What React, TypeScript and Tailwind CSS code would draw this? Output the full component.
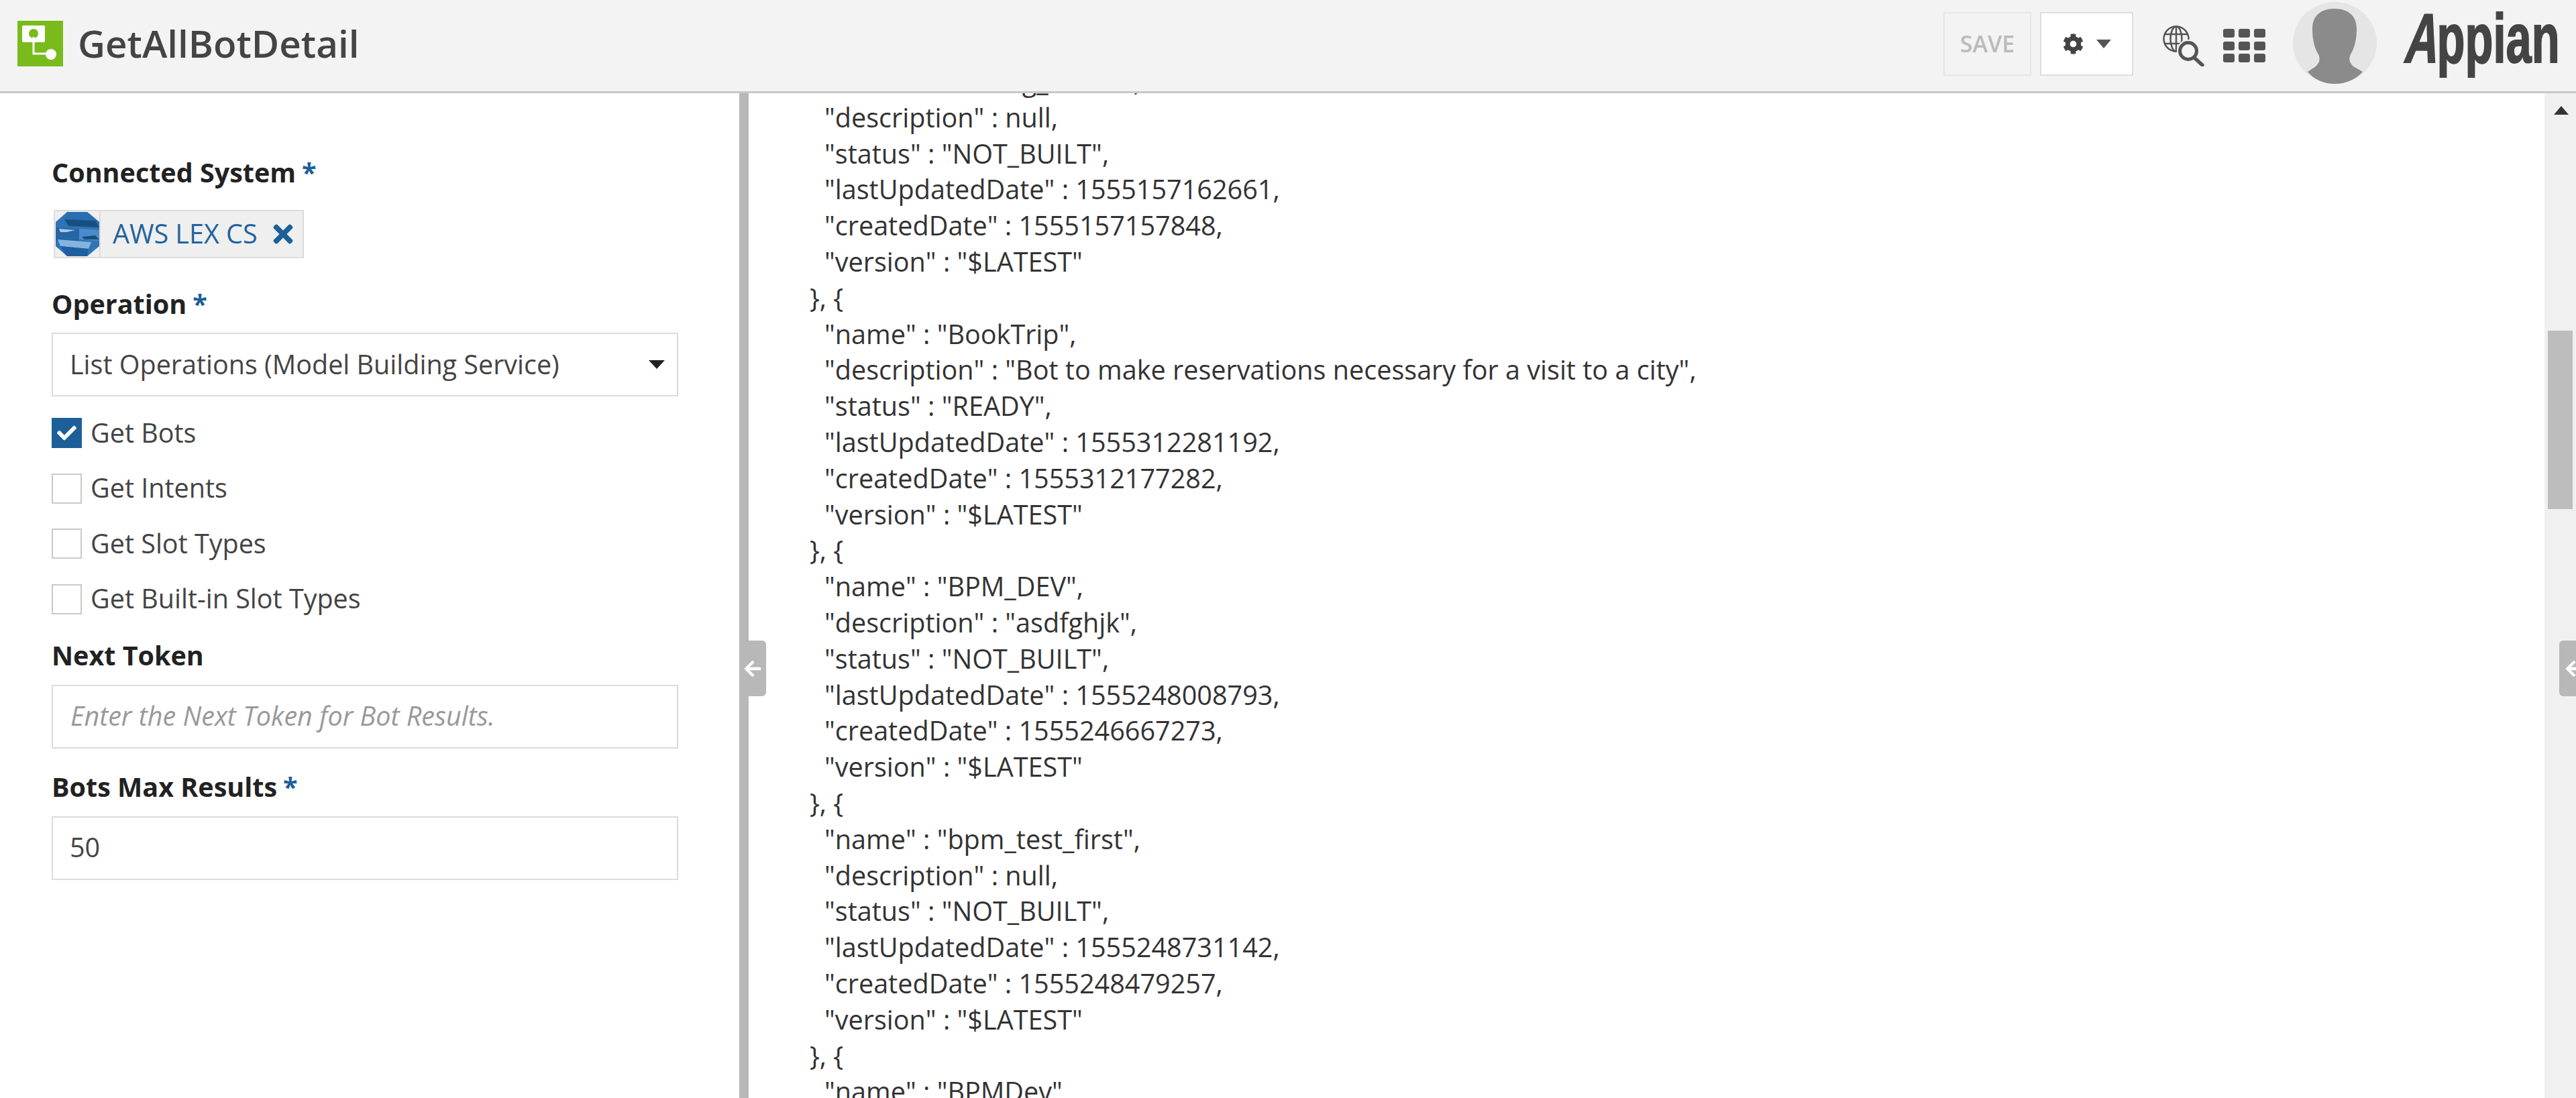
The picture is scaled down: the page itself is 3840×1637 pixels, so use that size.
import { FaArrowLeft, FaCheck, FaCog, FaTimes } from "react-icons/fa";

const jsonLines = [
  '"name" : "Testing_Demo",',
  '"description" : null,',
  '"status" : "NOT_BUILT",',
  '"lastUpdatedDate" : 1555157162661,',
  '"createdDate" : 1555157157848,',
  '"version" : "$LATEST"',
  "}, {",
  '"name" : "BookTrip",',
  '"description" : "Bot to make reservations necessary for a visit to a city",',
  '"status" : "READY",',
  '"lastUpdatedDate" : 1555312281192,',
  '"createdDate" : 1555312177282,',
  '"version" : "$LATEST"',
  "}, {",
  '"name" : "BPM_DEV",',
  '"description" : "asdfghjk",',
  '"status" : "NOT_BUILT",',
  '"lastUpdatedDate" : 1555248008793,',
  '"createdDate" : 1555246667273,',
  '"version" : "$LATEST"',
  "}, {",
  '"name" : "bpm_test_first",',
  '"description" : null,',
  '"status" : "NOT_BUILT",',
  '"lastUpdatedDate" : 1555248731142,',
  '"createdDate" : 1555248479257,',
  '"version" : "$LATEST"',
  "}, {",
  '"name" : "BPMDev",',
];

function Label({ text, required }: { text: string; required?: boolean }) {
  return (
    <div className="h-[54px] text-[39.5px] leading-[54px] font-bold text-[#222]">
      {text}
      {required && <span className="ml-[9px] text-[#1d5f99]">*</span>}
    </div>
  );
}

function CheckRow({ text, checked }: { text: string; checked?: boolean }) {
  return (
    <div className="flex h-[45px] items-center gap-[13px] text-[39.5px] text-[#444]">
      <div
        className={
          checked
            ? "flex h-[45px] w-[45px] items-center justify-center bg-[#1d5f99]"
            : "h-[45px] w-[45px] border-2 border-[#c9c9c9] bg-white"
        }
      >
        {checked && <FaCheck size={29} className="text-white" />}
      </div>
      {text}
    </div>
  );
}

function LexIcon() {
  return (
    <svg viewBox="0 0 66 68" className="h-[68px] w-[66px] shrink-0">
      <polygon points="18,1 48,1 66,16 66,52 48,67 18,67 1,52 1,16" fill="#2f75b5" />
      <polygon points="18,1 48,1 66,16 66,24 14,12" fill="#2a6db0" />
      <polygon points="14,12 60,14 66,24 20,22" fill="#174f7f" />
      <polygon points="1,24 36,26 36,50 1,44" fill="#2566a5" />
      <polygon points="36,26 66,28 66,44 36,42" fill="#4a8cca" />
      <polygon points="6,26 30,28 18,31 8,31" fill="#a9c9e6" />
      <polygon points="40,38 60,36 66,42 44,42" fill="#174f7f" />
      <polygon points="4,42 54,46 50,56 8,52" fill="#85b3df" />
      <polygon points="8,52 50,56 48,67 18,67" fill="#1f5f9f" />
    </svg>
  );
}

function GlobeSearch() {
  return (
    <svg viewBox="0 0 62 62" className="h-[62px] w-[62px]" fill="none" stroke="#555">
      <circle cx="20" cy="21" r="18.5" strokeWidth="2.5" />
      <ellipse cx="20" cy="21" rx="8.5" ry="18.5" strokeWidth="2.5" />
      <path d="M20 2.5v37M3 14h34M3 28h34" strokeWidth="2.5" />
      <circle cx="38" cy="39" r="17" fill="#f3f3f3" stroke="none" />
      <circle cx="38" cy="39" r="12.5" strokeWidth="5" />
      <path d="M47 49l12 11" strokeWidth="5.5" strokeLinecap="round" />
    </svg>
  );
}

function Avatar() {
  return (
    <svg viewBox="0 0 125 122" className="h-[122px] w-[125px]">
      <ellipse cx="62.5" cy="61" rx="62.5" ry="61" fill="#e5e5e5" />
      <path
        d="M62 10C40 10 29 22 29 40c0 18 4 30 9 38 3 8 2 12-4 18l-12 8c10 12 25 18 40 18 16 0 31-6 42-18l-14-8c-6-6-7-10-4-18 5-8 9-20 9-38 0-18-11-30-33-30z"
        fill="#8b8b8b"
      />
    </svg>
  );
}

export default function App() {
  return (
    <div className="flex h-[1637px] w-[3840px] flex-col overflow-hidden bg-white font-['Open_Sans',sans-serif]">
      <header className="flex h-[139px] shrink-0 items-center border-b-[3px] border-[#c8c8c8] bg-[#f3f3f3] pr-[24px] pl-[26px]">
        <div className="mb-[6px] h-[68px] w-[68px] bg-[#78bb1b]">
          <svg viewBox="0 0 68 68" className="h-[68px] w-[68px]">
            <rect x="7" y="7" width="34" height="25" rx="2" fill="#fff" />
            <circle cx="24" cy="19" r="7" fill="#78bb1b" />
            <path d="M24 24v25h24" fill="none" stroke="#fff" strokeWidth="3" />
            <circle cx="50" cy="50" r="8" fill="#fff" />
          </svg>
        </div>
        <div className="mb-[6px] ml-[22px] text-[56.5px] font-semibold text-[#444]">GetAllBotDetail</div>
        <div className="ml-auto flex items-center">
          <div className="-mt-[5px] flex h-[95px] w-[131px] items-center justify-center border-2 border-[#e6e6e6] text-[34px] font-semibold text-[#bbb]">
            SAVE
          </div>
          <div className="-mt-[5px] ml-[13px] flex h-[95px] w-[139px] items-center justify-center gap-[19px] border-2 border-[#dedede] bg-white">
            <FaCog size={31} className="text-[#444]" />
            <div className="h-0 w-0 border-x-[11px] border-t-[13px] border-x-transparent border-t-[#555]" />
          </div>
          <div className="ml-[44px]">
            <GlobeSearch />
          </div>
          <div className="ml-[28px] grid w-[63px] grid-cols-3 gap-x-[6px] gap-y-[5.5px]">
            {Array.from({ length: 9 }).map((_, i) => (
              <div key={i} className="h-[13px] rounded-[3px] bg-[#555]" />
            ))}
          </div>
          <div className="-mt-[8px] ml-[41px]">
            <Avatar />
          </div>
          <div className="-mt-[22px] ml-[40px] h-[97px] w-[233px]">
            <div className="origin-top-left scale-x-[0.66] font-['Liberation_Sans',sans-serif] text-[104px] leading-[97px] font-bold whitespace-nowrap text-[#444] [-webkit-text-stroke:2px_#444]">
              <span className="inline-block origin-[0_80%] -skew-x-[16deg]">A</span>ppian
            </div>
          </div>
        </div>
      </header>

      <main className="flex min-h-0 flex-1">
        <aside className="w-[1102px] shrink-0 pt-[91px] pr-[91px] pl-[77px]">
          <Label text="Connected System" required />
          <div className="mt-[29px] ml-[3px] flex h-[72px] w-[373px] items-center border-2 border-[#dcdcdc] bg-[#efefef]">
            <div className="border-r-2 border-[#dcdcdc]">
              <LexIcon />
            </div>
            <div className="ml-[18px] flex flex-1 items-center justify-between pr-[8px] text-[39.5px] text-[#22649e]">
              AWS LEX CS
              <FaTimes size={42} className="text-[#1d5f99]" />
            </div>
          </div>
          <div className="mt-[41px]">
            <Label text="Operation" required />
          </div>
          <div className="mt-[16px] flex h-[95px] items-center justify-between border-2 border-[#dcdcdc] pr-[18px] pl-[25px] text-[39.5px] text-[#444]">
            List Operations (Model Building Service)
            <div className="h-0 w-0 border-x-[12px] border-t-[13px] border-x-transparent border-t-[#222]" />
          </div>
          <div className="mt-[32px] flex flex-col gap-[37.5px]">
            <CheckRow text="Get Bots" checked />
            <CheckRow text="Get Intents" />
            <CheckRow text="Get Slot Types" />
            <CheckRow text="Get Built-in Slot Types" />
          </div>
          <div className="mt-[34px]">
            <Label text="Next Token" />
          </div>
          <div className="mt-[17px] flex h-[95px] items-center border-2 border-[#dcdcdc] pl-[26px] text-[39.5px] text-[#999] italic">
            Enter the Next Token for Bot Results.
          </div>
          <div className="mt-[30px]">
            <Label text="Bots Max Results" required />
          </div>
          <div className="mt-[17px] flex h-[95px] items-center border-2 border-[#dcdcdc] pl-[25px] text-[39.5px] text-[#444]">
            50
          </div>
        </aside>

        <div className="relative w-[14px] shrink-0 bg-[#b8b8b8]">
          <div className="absolute top-[816px] left-0 flex h-[83px] w-[40px] items-center justify-center rounded-r-[6px] bg-[#b8b8b8]">
            <FaArrowLeft size={28} className="text-white" />
          </div>
        </div>

        <section className="min-w-0 flex-1 overflow-hidden pl-[91px]">
          <div className="-mt-[44px] text-[39.6px] leading-[53.8px] whitespace-nowrap text-[#333]">
            {jsonLines.map((line, i) => (
              <div key={i} className={line.startsWith("}") ? "" : "pl-[22px]"}>
                {line}
              </div>
            ))}
          </div>
        </section>

        <div className="relative w-[47px] shrink-0 bg-[#f0f0f0]">
          <div className="absolute top-[19px] left-[14px] h-0 w-0 border-x-[11px] border-b-[13px] border-x-transparent border-b-[#333]" />
          <div className="absolute top-[354px] left-[5px] h-[266px] w-[37px] bg-[#bdbdbd]" />
          <div className="absolute top-[816px] right-0 flex h-[83px] w-[25px] items-center overflow-hidden rounded-l-[6px] bg-[#b8b8b8] pl-[8px]">
            <FaArrowLeft size={28} className="shrink-0 text-white" />
          </div>
        </div>
      </main>
    </div>
  );
}
